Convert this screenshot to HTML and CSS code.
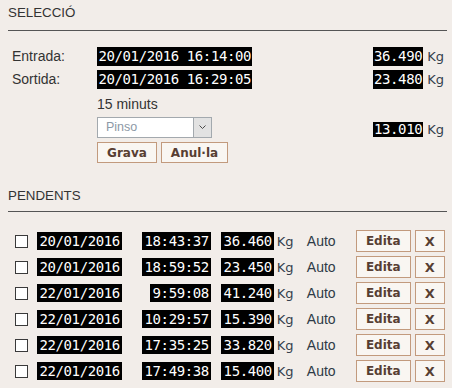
FILE: index.html
```html
<!DOCTYPE html>
<html lang="ca">
<head>
<meta charset="UTF-8">
<title>Pesades</title>
<link rel="stylesheet" href="styles.css">
</head>
<body>

<h2 class="section-title">SELECCIÓ</h2>

<div class="selection">
  <div class="sel-row">
    <span class="label">Entrada:</span>
    <span><span class="lcd">20/01/2016 16:14:00</span></span>
    <span class="weight"><span class="lcd">36.490</span><span class="unit">Kg</span></span>
  </div>
  <div class="sel-row">
    <span class="label">Sortida:</span>
    <span><span class="lcd">20/01/2016 16:29:05</span></span>
    <span class="weight"><span class="lcd">23.480</span><span class="unit">Kg</span></span>
  </div>
  <div class="sel-row duration-row">
    <span></span>
    <span class="duration">15 minuts</span>
  </div>
  <div class="sel-row select-row">
    <span></span>
    <div class="select">
      <span class="select-text">Pinso</span>
      <span class="select-arrow">
        <svg width="7" height="5" viewBox="0 0 7 5"><polyline points="0.5,0.5 3.5,3.5 6.5,0.5" fill="none" stroke="#4a4a4a" stroke-width="1"/></svg>
      </span>
    </div>
    <span class="weight weight-total"><span class="lcd small">13.010</span><span class="unit">Kg</span></span>
  </div>
  <div class="sel-row actions-row">
    <span></span>
    <div class="actions">
      <button class="btn btn-grava">Grava</button>
      <button class="btn btn-anula">Anul·la</button>
    </div>
  </div>
</div>

<h2 class="section-title pending-title">PENDENTS</h2>

<div class="pending">
  <div class="row">
    <span class="chk"><input type="checkbox"></span>
    <span class="date"><span class="lcd">20/01/2016</span></span>
    <span class="time"><span class="lcd">18:43:37</span></span>
    <span class="kg"><span class="lcd">36.460</span></span>
    <span class="unit">Kg</span>
    <span class="mode">Auto</span>
    <button class="btn btn-edit">Edita</button>
    <button class="btn btn-del">X</button>
  </div>
  <div class="row">
    <span class="chk"><input type="checkbox"></span>
    <span class="date"><span class="lcd">20/01/2016</span></span>
    <span class="time"><span class="lcd">18:59:52</span></span>
    <span class="kg"><span class="lcd">23.450</span></span>
    <span class="unit">Kg</span>
    <span class="mode">Auto</span>
    <button class="btn btn-edit">Edita</button>
    <button class="btn btn-del">X</button>
  </div>
  <div class="row">
    <span class="chk"><input type="checkbox"></span>
    <span class="date"><span class="lcd">22/01/2016</span></span>
    <span class="time"><span class="lcd">9:59:08</span></span>
    <span class="kg"><span class="lcd">41.240</span></span>
    <span class="unit">Kg</span>
    <span class="mode">Auto</span>
    <button class="btn btn-edit">Edita</button>
    <button class="btn btn-del">X</button>
  </div>
  <div class="row">
    <span class="chk"><input type="checkbox"></span>
    <span class="date"><span class="lcd">22/01/2016</span></span>
    <span class="time"><span class="lcd">10:29:57</span></span>
    <span class="kg"><span class="lcd">15.390</span></span>
    <span class="unit">Kg</span>
    <span class="mode">Auto</span>
    <button class="btn btn-edit">Edita</button>
    <button class="btn btn-del">X</button>
  </div>
  <div class="row">
    <span class="chk"><input type="checkbox"></span>
    <span class="date"><span class="lcd">22/01/2016</span></span>
    <span class="time"><span class="lcd">17:35:25</span></span>
    <span class="kg"><span class="lcd">33.820</span></span>
    <span class="unit">Kg</span>
    <span class="mode">Auto</span>
    <button class="btn btn-edit">Edita</button>
    <button class="btn btn-del">X</button>
  </div>
  <div class="row">
    <span class="chk"><input type="checkbox"></span>
    <span class="date"><span class="lcd">22/01/2016</span></span>
    <span class="time"><span class="lcd">17:49:38</span></span>
    <span class="kg"><span class="lcd">15.400</span></span>
    <span class="unit">Kg</span>
    <span class="mode">Auto</span>
    <button class="btn btn-edit">Edita</button>
    <button class="btn btn-del">X</button>
  </div>
</div>

</body>
</html>
```

FILE: styles.css
```css
body {
  margin: 0;
  padding: 0 5px 0 8px;
  background-color: #f2ede9;
  color: #333;
  font-family: 'Liberation Sans', Arial, sans-serif;
  font-size: 14px;
  overflow: hidden;
}

.section-title {
  margin: 0;
  padding: 5px 0 10px 0;
  font-size: 13.33px;
  font-weight: normal;
  line-height: 15px;
  color: #333;
  border-bottom: 1px solid #555;
}

.pending-title {
  margin-top: 25px;
  padding-top: 0;
  padding-bottom: 8px;
}

/* Zona de selecció */

.selection {
  margin-top: 16px;
  padding: 0 3px 0 4px;
}

.sel-row {
  display: grid;
  grid-template-columns: 85px 1fr auto;
  align-items: center;
  margin-bottom: 4px;
}

.label {
  line-height: 19px;
}

.lcd {
  display: inline-block;
  background-color: #000;
  color: #fff;
  font-family: 'DejaVu Sans Mono', monospace;
  font-size: 14px;
  letter-spacing: -0.4px;
  line-height: 19px;
  padding: 0 1px 0 1.5px;
}

.lcd.small {
  line-height: 15px;
}

.weight {
  display: flex;
  align-items: center;
}

.weight-total {
  padding-top: 3px;
}

.unit {
  font-family: 'DejaVu Sans', Verdana, sans-serif;
  font-size: 13px;
  color: #34404c;
  margin-left: 4px;
}

.duration-row {
  margin-top: 7px;
  margin-bottom: 5px;
}

.duration {
  line-height: 16px;
}

.select {
  display: flex;
  width: 115px;
  height: 21px;
  box-sizing: border-box;
  border: 1px solid #a3a9ae;
  background-color: #fff;
}

.select-text {
  flex: 1;
  padding-left: 8px;
  font-size: 12.5px;
  line-height: 19px;
  color: #8d99a6;
}

.select-arrow {
  width: 17px;
  background-color: #e2e2e2;
  border-left: 1px solid #a3a9ae;
  display: flex;
  align-items: center;
  justify-content: center;
}

.actions {
  display: flex;
  gap: 4px;
}

.btn {
  box-sizing: border-box;
  height: 21px;
  padding: 0;
  border: 1px solid #c29a7d;
  background-color: #f9f6f2;
  color: #573e33;
  font-family: 'DejaVu Sans', Verdana, sans-serif;
  font-size: 12px;
  font-weight: bold;
  cursor: pointer;
}

.btn-grava {
  width: 60px;
}

.btn-anula {
  width: 67px;
}

/* Llista de pendents */

.pending {
  margin-top: 16px;
}

.row {
  display: flex;
  align-items: center;
  height: 26px;
}

.row .lcd {
  line-height: 18px;
  padding: 0 2px 0 2.5px;
}

.chk {
  padding-left: 7px;
  margin-right: 9px;
  display: flex;
}

.chk input {
  appearance: none;
  -webkit-appearance: none;
  width: 13px;
  height: 13px;
  margin: 0;
  border: 1px solid #3a3a3a;
  background-color: #fff;
}

.time {
  width: 89px;
  text-align: right;
}

.kg {
  width: 63px;
  text-align: right;
}

.row .unit {
  width: 30px;
  margin-left: 0;
  padding-left: 3px;
}

.mode {
  width: 49px;
  color: #2e3a46;
}

.btn-edit {
  width: 55px;
  height: 22px;
}

.btn-del {
  width: 30px;
  height: 22px;
  margin-left: 4px;
  font-size: 13px;
}
```
